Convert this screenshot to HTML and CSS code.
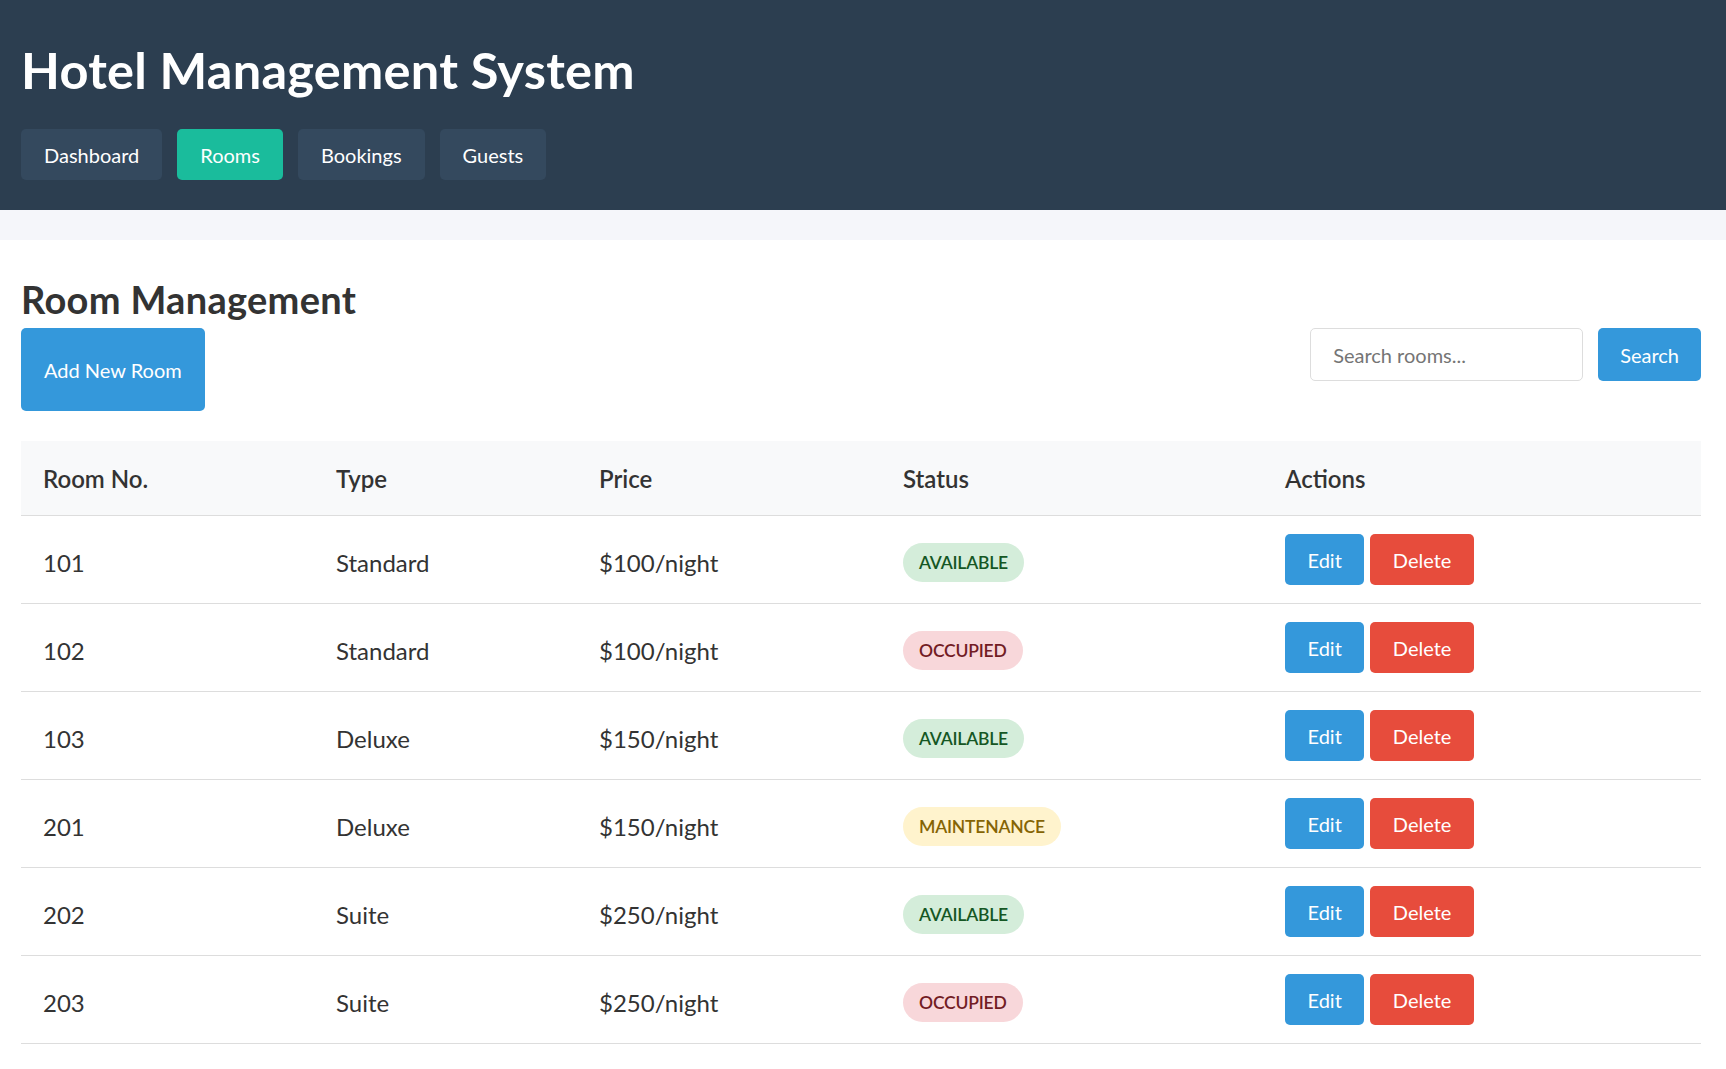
FILE: index.html
```html
<!DOCTYPE html>
<html lang="en">
<head>
<meta charset="utf-8">
<title>Hotel Management System</title>
<link rel="stylesheet" href="styles.css">
</head>
<body>
<header class="site-header">
  <h1 class="site-title">Hotel Management System</h1>
  <nav class="nav">
    <a class="nav-btn" href="#">Dashboard</a>
    <a class="nav-btn active" href="#">Rooms</a>
    <a class="nav-btn" href="#">Bookings</a>
    <a class="nav-btn" href="#">Guests</a>
  </nav>
</header>
<main class="main">
  <h2 class="section-title">Room Management</h2>
  <div class="toolbar">
    <button class="btn btn-primary btn-add">Add New Room</button>
    <div class="search-group">
      <input class="search-input" type="text" placeholder="Search rooms...">
      <button class="btn btn-primary btn-search">Search</button>
    </div>
  </div>
  <table class="rooms">
    <colgroup>
      <col class="c1"><col class="c2"><col class="c3"><col class="c4"><col class="c5">
    </colgroup>
    <thead>
      <tr><th>Room No.</th><th>Type</th><th>Price</th><th>Status</th><th>Actions</th></tr>
    </thead>
    <tbody>
      <tr><td class="t">101</td><td class="t">Standard</td><td class="t">$100/night</td><td class="t"><span class="badge available">Available</span></td><td class="act"><button class="btn btn-sm btn-primary">Edit</button><button class="btn btn-sm btn-danger">Delete</button></td></tr>
      <tr><td class="t">102</td><td class="t">Standard</td><td class="t">$100/night</td><td class="t"><span class="badge occupied">Occupied</span></td><td class="act"><button class="btn btn-sm btn-primary">Edit</button><button class="btn btn-sm btn-danger">Delete</button></td></tr>
      <tr><td class="t">103</td><td class="t">Deluxe</td><td class="t">$150/night</td><td class="t"><span class="badge available">Available</span></td><td class="act"><button class="btn btn-sm btn-primary">Edit</button><button class="btn btn-sm btn-danger">Delete</button></td></tr>
      <tr><td class="t">201</td><td class="t">Deluxe</td><td class="t">$150/night</td><td class="t"><span class="badge maintenance">Maintenance</span></td><td class="act"><button class="btn btn-sm btn-primary">Edit</button><button class="btn btn-sm btn-danger">Delete</button></td></tr>
      <tr><td class="t">202</td><td class="t">Suite</td><td class="t">$250/night</td><td class="t"><span class="badge available">Available</span></td><td class="act"><button class="btn btn-sm btn-primary">Edit</button><button class="btn btn-sm btn-danger">Delete</button></td></tr>
      <tr><td class="t">203</td><td class="t">Suite</td><td class="t">$250/night</td><td class="t"><span class="badge occupied">Occupied</span></td><td class="act"><button class="btn btn-sm btn-primary">Edit</button><button class="btn btn-sm btn-danger">Delete</button></td></tr>
    </tbody>
  </table>
</main>
</body>
</html>
```
FILE: styles.css
```css
* { box-sizing: border-box; }

html, body {
  margin: 0;
  padding: 0;
}

body {
  font-family: Lato, "Open Sans", "Liberation Sans", sans-serif;
  background: #f5f6fa;
  color: #333;
  font-size: 20px;
}

.site-header {
  background: #2c3e50;
  color: #fff;
  padding: 0 25px 30px 21px;
  margin-bottom: 30px;
}

.site-title {
  margin: 0;
  padding: 40px 0 29px 0;
  font-size: 50.5px;
  line-height: 60px;
  font-weight: 700;
  letter-spacing: 0.25px;
  color: #fff;
}

.nav {
  display: flex;
  gap: 15px;
}

.nav-btn {
  display: block;
  background: #34495e;
  color: #fff;
  text-decoration: none;
  font-size: 20px;
  line-height: 26px;
  padding: 13px 23px 12px;
  border-radius: 5px;
}

.nav-btn.active {
  background: #1abc9c;
}

.main {
  background: #fff;
  padding: 37px 25px 40px 21px;
  min-height: 829px;
}

.section-title {
  margin: 0 0 7px 0;
  font-size: 38px;
  line-height: 44px;
  font-weight: 700;
  letter-spacing: 0.3px;
  color: #333;
}

.toolbar {
  display: flex;
  justify-content: space-between;
  align-items: stretch;
  margin-bottom: 30px;
}

.btn {
  font-family: inherit;
  border: none;
  border-radius: 5px;
  color: #fff;
  font-size: 20px;
  line-height: 26px;
  cursor: pointer;
}

.btn-primary { background: #3498db; }
.btn-danger { background: #e74c3c; }

.btn-add {
  padding: 0 23px;
}

.search-group {
  display: flex;
  gap: 15px;
  margin-bottom: 30px;
}

.search-input {
  width: 273px;
  height: 53px;
  border: 1px solid #ddd;
  border-radius: 5px;
  padding: 0 22px;
  font-family: inherit;
  font-size: 20px;
  color: #333;
}

.search-input::placeholder {
  color: #757575;
}

.btn-search {
  height: 53px;
  padding: 0 22px;
}

.rooms {
  width: 100%;
  border-collapse: collapse;
  table-layout: fixed;
  font-size: 24px;
}

.c1 { width: 293px; }
.c2 { width: 263px; }
.c3 { width: 304px; }
.c4 { width: 382px; }
.c5 { width: 438px; }

.rooms th {
  background: #f8f9fa;
  text-align: left;
  font-weight: 600;
  color: #333;
  line-height: 33px;
  padding: 21px 22px 20px;
  border-bottom: 1px solid #ddd;
}

.rooms td {
  padding: 18px 22px;
  border-bottom: 1px solid #ddd;
  vertical-align: middle;
  line-height: 33px;
}

.rooms td.t {
  padding-top: 21px;
  padding-bottom: 15px;
}

.badge {
  display: inline-block;
  height: 39px;
  line-height: 39px;
  padding: 0 16px;
  border-radius: 20px;
  font-size: 17.5px;
  font-weight: 600;
  text-transform: uppercase;
  letter-spacing: -0.2px;
  vertical-align: middle;
}

.badge.available { background: #d4edda; color: #155724; }
.badge.occupied { background: #f8d7da; color: #721c24; }
.badge.maintenance { background: #fff3cd; color: #856404; }

.act {
  white-space: nowrap;
  font-size: 0;
}

.btn-sm {
  height: 51px;
  padding: 0 22.5px;
  margin-right: 6px;
  vertical-align: middle;
}
```
